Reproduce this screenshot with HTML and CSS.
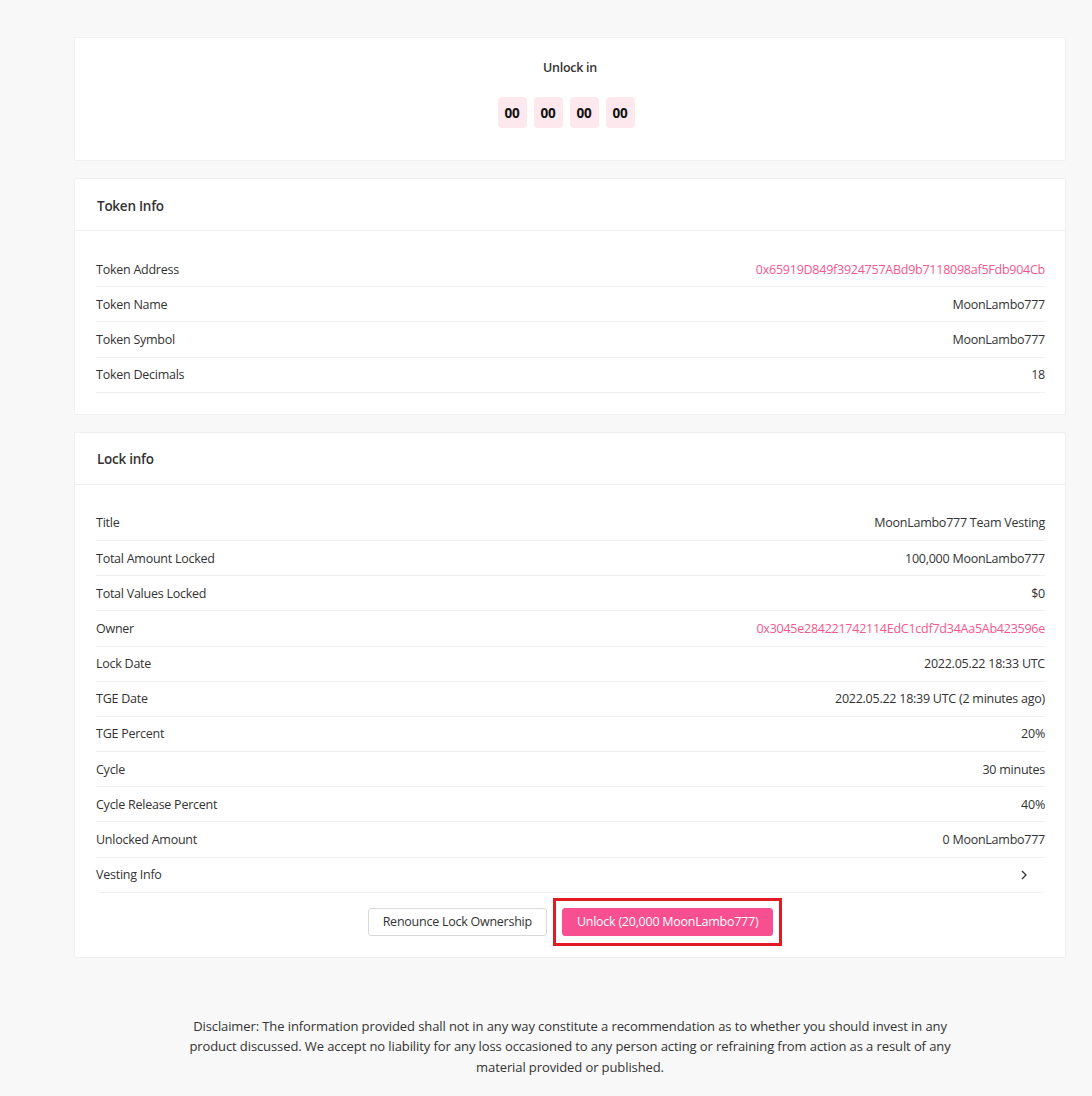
FILE: index.html
```html
<!DOCTYPE html>
<html lang="en">
<head>
<meta charset="utf-8">
<title>Lock</title>
<link rel="stylesheet" href="styles.css">
</head>
<body>
<main class="page">
  <section class="card countdown-card">
    <div class="countdown-title">Unlock in</div>
    <div class="countdown">
      <span class="cd-box">00</span>
      <span class="cd-box">00</span>
      <span class="cd-box">00</span>
      <span class="cd-box">00</span>
    </div>
  </section>

  <section class="card">
    <header class="card-head">Token Info</header>
    <div class="card-body">
      <div class="row"><span>Token Address</span><span class="link">0x65919D849f3924757ABd9b7118098af5Fdb904Cb</span></div>
      <div class="row"><span>Token Name</span><span>MoonLambo777</span></div>
      <div class="row"><span>Token Symbol</span><span>MoonLambo777</span></div>
      <div class="row"><span>Token Decimals</span><span>18</span></div>
    </div>
  </section>

  <section class="card">
    <header class="card-head">Lock info</header>
    <div class="card-body">
      <div class="row"><span>Title</span><span>MoonLambo777 Team Vesting</span></div>
      <div class="row"><span>Total Amount Locked</span><span>100,000 MoonLambo777</span></div>
      <div class="row"><span>Total Values Locked</span><span>$0</span></div>
      <div class="row"><span>Owner</span><span class="link">0x3045e284221742114EdC1cdf7d34Aa5Ab423596e</span></div>
      <div class="row"><span>Lock Date</span><span>2022.05.22 18:33 UTC</span></div>
      <div class="row"><span>TGE Date</span><span>2022.05.22 18:39 UTC (2 minutes ago)</span></div>
      <div class="row"><span>TGE Percent</span><span>20%</span></div>
      <div class="row"><span>Cycle</span><span>30 minutes</span></div>
      <div class="row"><span>Cycle Release Percent</span><span>40%</span></div>
      <div class="row"><span>Unlocked Amount</span><span>0 MoonLambo777</span></div>
      <div class="row row-collapse"><span>Vesting Info</span>
        <svg class="chevron" width="8" height="10" viewBox="0 0 8 10"><polyline points="2,1 6,5 2,9" fill="none" stroke="#333" stroke-width="1.3"/></svg>
      </div>
      <div class="actions">
        <button class="btn btn-default">Renounce Lock Ownership</button>
        <span class="highlight"><button class="btn btn-primary">Unlock (20,000 MoonLambo777)</button></span>
      </div>
    </div>
  </section>

  <p class="disclaimer">Disclaimer: The information provided shall not in any way constitute a recommendation as to whether you should invest in any product discussed. We accept no liability for any loss occasioned to any person acting or refraining from action as a result of any material provided or published.</p>
</main>
</body>
</html>
```

FILE: styles.css
```css
* { box-sizing: border-box; }
html, body { margin: 0; padding: 0; }
body {
  background: #f8f8f8;
  font-family: "Open Sans", "Noto Sans", sans-serif;
  font-size: 12.5px;
  letter-spacing: -0.25px;
  color: #333;
}
.page {
  width: 992px;
  margin-left: 74px;
  padding-top: 37px;
  display: flex;
  flex-direction: column;
  gap: 17px;
}
.card {
  background: #fff;
  border: 1px solid #f0f0f0;
  border-radius: 2px;
}
.countdown-card {
  height: 124px;
  padding-top: 19px;
  display: flex;
  flex-direction: column;
  align-items: center;
}
.countdown-title {
  line-height: 22px;
  font-weight: 600;
  color: #333;
}
.countdown {
  margin-top: 18px;
  margin-right: 8px;
  display: flex;
  gap: 7px;
}
.cd-box {
  width: 29px;
  height: 31px;
  background: #fde8ee;
  border-radius: 4px;
  display: flex;
  align-items: center;
  justify-content: center;
  font-weight: 700;
  font-size: 13.5px;
  color: #111;
}
.card-head {
  height: 52px;
  padding: 2px 22px 0;
  display: flex;
  align-items: center;
  font-weight: 600;
  font-size: 13.5px;
  border-bottom: 1px solid #f0f0f0;
}
.card-body {
  padding: 21px 20px 21px 21px;
}
.row {
  height: 35.2px;
  display: flex;
  justify-content: space-between;
  align-items: center;
  border-bottom: 1px solid #f0f0f0;
}
.link { color: #f5578f; }
.row-collapse { border-radius: 0 0 4px 4px; }
.chevron { margin-right: 17px; }
.actions {
  margin-top: 15px;
  display: flex;
  justify-content: center;
  gap: 15px;
}
.btn {
  height: 28px;
  padding: 0 14px;
  font-family: inherit;
  font-size: 12.5px;
  letter-spacing: -0.25px;
  border-radius: 3px;
  cursor: pointer;
}
.btn-default {
  background: #fff;
  border: 1px solid #d9d9d9;
  color: #333;
}
.btn-primary {
  background: #f74f8f;
  border: 1px solid #f74f8f;
  color: #fff;
}
.highlight {
  position: relative;
  display: inline-flex;
}
.highlight::after {
  content: "";
  position: absolute;
  inset: -10px -9px;
  border: 3px solid #e21b23;
  pointer-events: none;
}
.disclaimer {
  margin: 41px auto 0;
  width: 780px;
  text-align: center;
  line-height: 20.5px;
  font-size: 13px;
  letter-spacing: -0.1px;
  color: #333;
}
```
